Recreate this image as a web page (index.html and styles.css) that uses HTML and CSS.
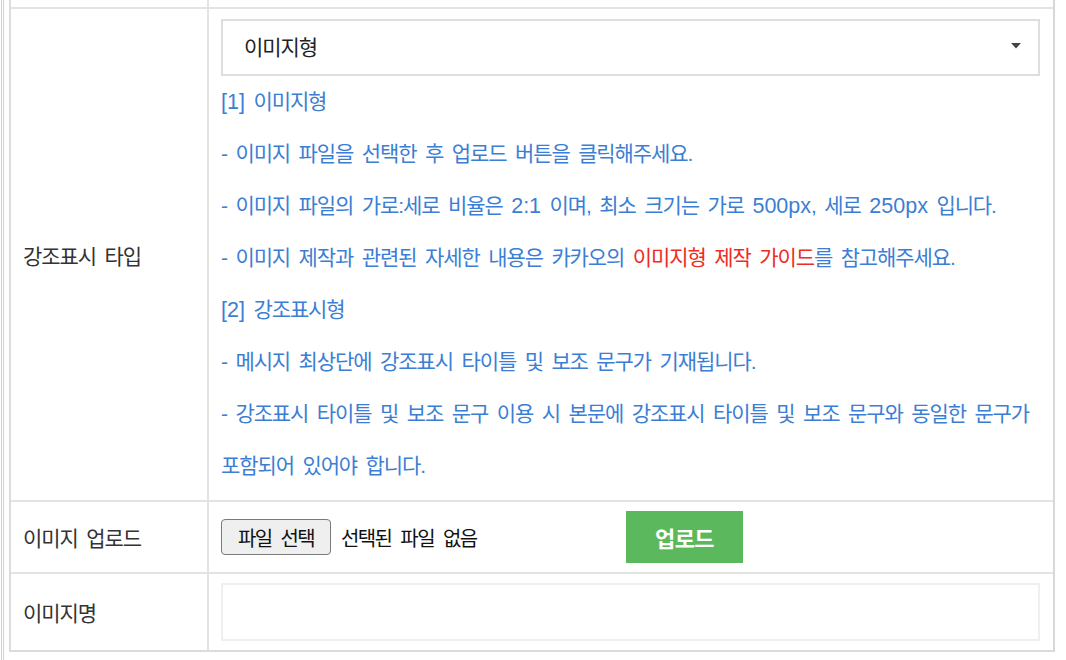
FILE: index.html
```html
<!DOCTYPE html>
<html lang="ko">
<head>
<meta charset="utf-8">
<title>강조표시 설정</title>
<link rel="stylesheet" href="styles.css">
</head>
<body>
<div class="frame">
  <div class="form-table">
    <div class="row row-prev">
      <div class="th"></div>
      <div class="td"></div>
    </div>
    <div class="row">
      <div class="th">강조표시 타입</div>
      <div class="td td-type">
        <div class="select-wrap">
          <select class="select">
            <option>이미지형</option>
            <option>강조표시형</option>
          </select>
          <svg class="select-arrow" width="10" height="6" viewBox="0 0 10 6"><path d="M0 0H10L5 5.5Z" fill="#444"/></svg>
        </div>
        <div class="help">
          <div class="line"><span class="lat">[1]</span> 이미지형</div>
          <div class="line">- 이미지 파일을 선택한 후 업로드 버튼을 클릭해주세요.</div>
          <div class="line">- 이미지 파일의 가로:세로 비율은 <span class="lat">2:1</span> 이며, 최소 크기는 가로 <span class="lat">500px</span>, 세로 <span class="lat">250px</span> 입니다.</div>
          <div class="line">- 이미지 제작과 관련된 자세한 내용은 카카오의 <span class="red">이미지형 제작 가이드</span>를 참고해주세요.</div>
          <div class="line"><span class="lat">[2]</span> 강조표시형</div>
          <div class="line">- 메시지 최상단에 강조표시 타이틀 및 보조 문구가 기재됩니다.</div>
          <div class="line">- 강조표시 타이틀 및 보조 문구 이용 시 본문에 강조표시 타이틀 및 보조 문구와 동일한 문구가</div>
          <div class="line">포함되어 있어야 합니다.</div>
        </div>
      </div>
    </div>
    <div class="row">
      <div class="th">이미지 업로드</div>
      <div class="td td-upload">
        <span class="file-input">
          <button type="button" class="file-btn">파일 선택</button>
          <span class="file-name">선택된 파일 없음</span>
        </span>
        <button type="button" class="upload-btn">업로드</button>
      </div>
    </div>
    <div class="row row-last">
      <div class="th">이미지명</div>
      <div class="td td-name">
        <input type="text" class="text-input">
      </div>
    </div>
  </div>
</div>
</body>
</html>
```

FILE: styles.css
```css
* {
  box-sizing: border-box;
}

html, body {
  margin: 0;
  padding: 0;
  background: #fff;
}

body {
  font-family: "Liberation Sans", "Noto Sans CJK KR", sans-serif;
  font-size: 21px;
  letter-spacing: -1.1px;
  word-spacing: 3.8px;
  color: #333;
}

.frame {
  margin-left: 1px;
  border-left: 3px double #d2d2d2;
  padding-left: 5px;
  height: 660px;
  overflow: hidden;
}

.form-table {
  width: 1046px;
  border-left: 2px solid #dcdcdc;
  border-right: 2px solid #d8d8d8;
  border-bottom: 2px solid #dcdcdc;
}

.row {
  display: grid;
  grid-template-columns: 198px 1fr;
  border-bottom: 2px solid #e3e3e3;
}

.row-last {
  border-bottom: none;
}

.row-prev {
  height: 9px;
}

.th {
  border-right: 2px solid #e3e3e3;
  padding-left: 12px;
  display: flex;
  align-items: center;
  color: #333;
}

.td {
  padding: 9px 13px 9px 12px;
}

.td-type {
  padding: 10px 13px 8px 12px;
}

.select-wrap {
  position: relative;
}

.select {
  display: block;
  width: 100%;
  height: 57px;
  border: 2px solid #dedede;
  border-radius: 0;
  background: #fff;
  padding: 0 40px 0 21px;
  font-family: inherit;
  font-size: 21px;
  letter-spacing: -1.1px;
  color: #222;
  appearance: none;
  -webkit-appearance: none;
  outline: none;
}

.select-arrow {
  position: absolute;
  right: 19px;
  top: 24px;
}

.help {
  color: #3b7ed4;
  line-height: 52px;
  white-space: nowrap;
}

.lat {
  font-size: 21.5px;
  letter-spacing: 0;
  word-spacing: 0;
}

.red {
  color: #ee2b25;
}

.td-upload {
  display: flex;
  align-items: center;
}

.file-input {
  display: flex;
  align-items: center;
  width: 405px;
  color: #111;
  font-size: 20px;
  letter-spacing: -1.6px;
  word-spacing: 5px;
}

.file-btn {
  width: 110px;
  height: 36px;
  border: 1px solid #7a7a7a;
  border-radius: 4px;
  background: #efefef;
  font-family: inherit;
  font-size: 20px;
  letter-spacing: -1.6px;
  word-spacing: 5px;
  color: #111;
  padding: 0;
  margin-right: 10px;
}

.upload-btn {
  width: 117px;
  height: 52px;
  border: none;
  background: #5cb85c;
  color: #fff;
  font-family: inherit;
  font-size: 22px;
  font-weight: bold;
  letter-spacing: -0.6px;
  padding: 0;
}

.td-name {
  padding: 9px 13px 9px 12px;
}

.text-input {
  display: block;
  width: 100%;
  height: 58px;
  border: 2px solid #efefef;
  border-radius: 0;
  background: #fff;
  outline: none;
  font-family: inherit;
  font-size: 20px;
}
```
